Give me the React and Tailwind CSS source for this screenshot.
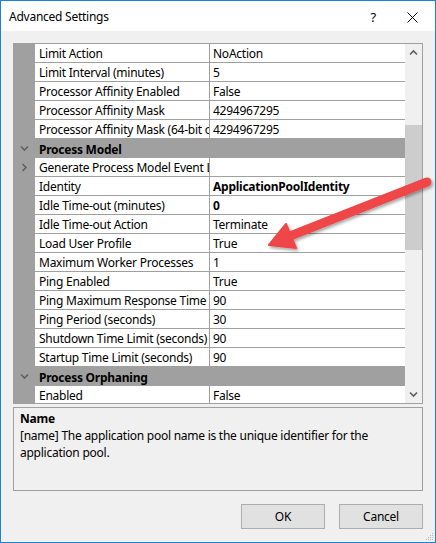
const rows = [
  { label: 'Limit Action', value: 'NoAction' },
  { label: 'Limit Interval (minutes)', value: '5' },
  { label: 'Processor Affinity Enabled', value: 'False' },
  { label: 'Processor Affinity Mask', value: '4294967295' },
  { label: 'Processor Affinity Mask (64-bit option)', value: '4294967295' },
  { category: 'Process Model' },
  { label: 'Generate Process Model Event Log Entry', value: '', expand: true },
  { label: 'Identity', value: 'ApplicationPoolIdentity', bold: true },
  { label: 'Idle Time-out (minutes)', value: '0', bold: true },
  { label: 'Idle Time-out Action', value: 'Terminate' },
  { label: 'Load User Profile', value: 'True' },
  { label: 'Maximum Worker Processes', value: '1' },
  { label: 'Ping Enabled', value: 'True' },
  { label: 'Ping Maximum Response Time (seconds)', value: '90' },
  { label: 'Ping Period (seconds)', value: '30' },
  { label: 'Shutdown Time Limit (seconds)', value: '90' },
  { label: 'Startup Time Limit (seconds)', value: '90' },
  { category: 'Process Orphaning' },
  { label: 'Enabled', value: 'False' },
];

const Chevron = ({ dir }) => (
  <svg width="9" height="9" viewBox="0 0 9 9" fill="none" stroke="#606060" strokeWidth="1.6">
    {dir === 'down' && <path d="M1 2.5 L4.5 6 L8 2.5" />}
    {dir === 'right' && <path d="M2.5 1 L6 4.5 L2.5 8" />}
    {dir === 'up' && <path d="M1 6.5 L4.5 3 L8 6.5" />}
  </svg>
);

const GridRow = ({ row }) => {
  if (row.category) {
    return (
      <div className="flex h-[19px] shrink-0 bg-[#a0a0a0]">
        <div className="w-[21px] flex items-center justify-center">
          <Chevron dir="down" />
        </div>
        <div className="pl-[4px] pt-[2px] flex items-center font-bold text-black">{row.category}</div>
      </div>
    );
  }
  return (
    <div className="flex h-[19px] shrink-0 bg-[#a0a0a0]">
      <div className="w-[21px] flex items-center justify-center">
        {row.expand && <Chevron dir="right" />}
      </div>
      <div className="w-[174px] h-[18px] bg-white pl-[4px] pt-[2px] flex items-center whitespace-nowrap overflow-hidden text-black">
        {row.label}
      </div>
      <div className="w-px" />
      <div className={`flex-1 h-[18px] bg-white pl-[3px] pt-[2px] flex items-center whitespace-nowrap overflow-hidden text-black ${row.bold ? 'font-bold' : ''}`}>
        {row.value}
      </div>
    </div>
  );
};

const App = () => {
  return (
    <div
      className="relative w-[436px] h-[543px] border border-[#1883d7] bg-[#f0f0f0] flex flex-col text-[12px] leading-none tracking-[-0.25px]"
      style={{ fontFamily: '"Noto Sans", sans-serif' }}
    >
      {/* Title bar */}
      <div className="h-[30px] bg-white flex items-center shrink-0 pt-[2px]">
        <span className="pl-[8px] text-[12px] text-black">Advanced Settings</span>
        <span className="ml-auto mr-[31px] text-[13px] text-black">?</span>
        <svg className="mr-[17px]" width="11" height="11" viewBox="0 0 11 11" stroke="#000" strokeWidth="1">
          <path d="M0.5 0.5 L10.5 10.5 M10.5 0.5 L0.5 10.5" />
        </svg>
      </div>

      {/* Property grid */}
      <div className="mt-[12px] ml-[12px] w-[410px] h-[361px] border border-[#a0a0a0] flex shrink-0">
        <div className="flex-1 flex flex-col overflow-hidden">
          {rows.map((r, i) => (
            <GridRow key={i} row={r} />
          ))}
        </div>
        <div className="w-[17px] bg-[#f0f0f0] flex flex-col items-center">
          <div className="h-[17px] flex items-center justify-center">
            <Chevron dir="up" />
          </div>
          <div className="mt-[64px] h-[125px] w-full bg-[#cdcdcd]" />
          <div className="mt-auto h-[17px] flex items-center justify-center">
            <Chevron dir="down" />
          </div>
        </div>
      </div>

      {/* Description */}
      <div className="mt-[3px] ml-[12px] w-[410px] h-[84px] border border-[#a0a0a0] px-[6px] pt-[3px] text-black">
        <div className="font-bold leading-[16px]">Name</div>
        <div className="leading-[17px]">
          [name] The application pool name is the unique identifier for the application pool.
        </div>
      </div>

      {/* Buttons */}
      <div className="mt-[13px] flex gap-[14px] justify-end pr-[12px]">
        <button className="w-[84px] h-[25px] bg-[#e1e1e1] border border-[#adadad] text-black text-[12px]">OK</button>
        <button className="w-[84px] h-[25px] bg-[#e1e1e1] border border-[#adadad] text-black text-[12px]">Cancel</button>
      </div>

      {/* Resize grip */}
      <svg className="absolute right-[1px] bottom-[1px]" width="10" height="10" viewBox="0 0 10 10" fill="#b8b8b8">
        <rect x="8" y="2" width="1" height="1" />
        <rect x="6" y="4" width="1" height="1" />
        <rect x="8" y="4" width="1" height="1" />
        <rect x="4" y="6" width="1" height="1" />
        <rect x="6" y="6" width="1" height="1" />
        <rect x="8" y="6" width="1" height="1" />
        <rect x="2" y="8" width="1" height="1" />
        <rect x="4" y="8" width="1" height="1" />
        <rect x="6" y="8" width="1" height="1" />
        <rect x="8" y="8" width="1" height="1" />
      </svg>

      {/* Annotation arrow */}
      <svg className="absolute left-0 top-0 pointer-events-none" width="436" height="543" viewBox="0 0 436 543">
        <defs>
          <filter id="sh" x="-20%" y="-20%" width="140%" height="140%">
            <feDropShadow dx="1.5" dy="2" stdDeviation="1.5" floodColor="#000" floodOpacity="0.35" />
          </filter>
        </defs>
        <g filter="url(#sh)" fill="#ef4646" stroke="#ef4646">
          <line x1="426" y1="181" x2="289" y2="235" strokeWidth="9" strokeLinecap="round" />
          <polygon points="268,244 285,223 295,247" strokeWidth="2" strokeLinejoin="round" />
        </g>
      </svg>
    </div>
  );
};

export default App;
